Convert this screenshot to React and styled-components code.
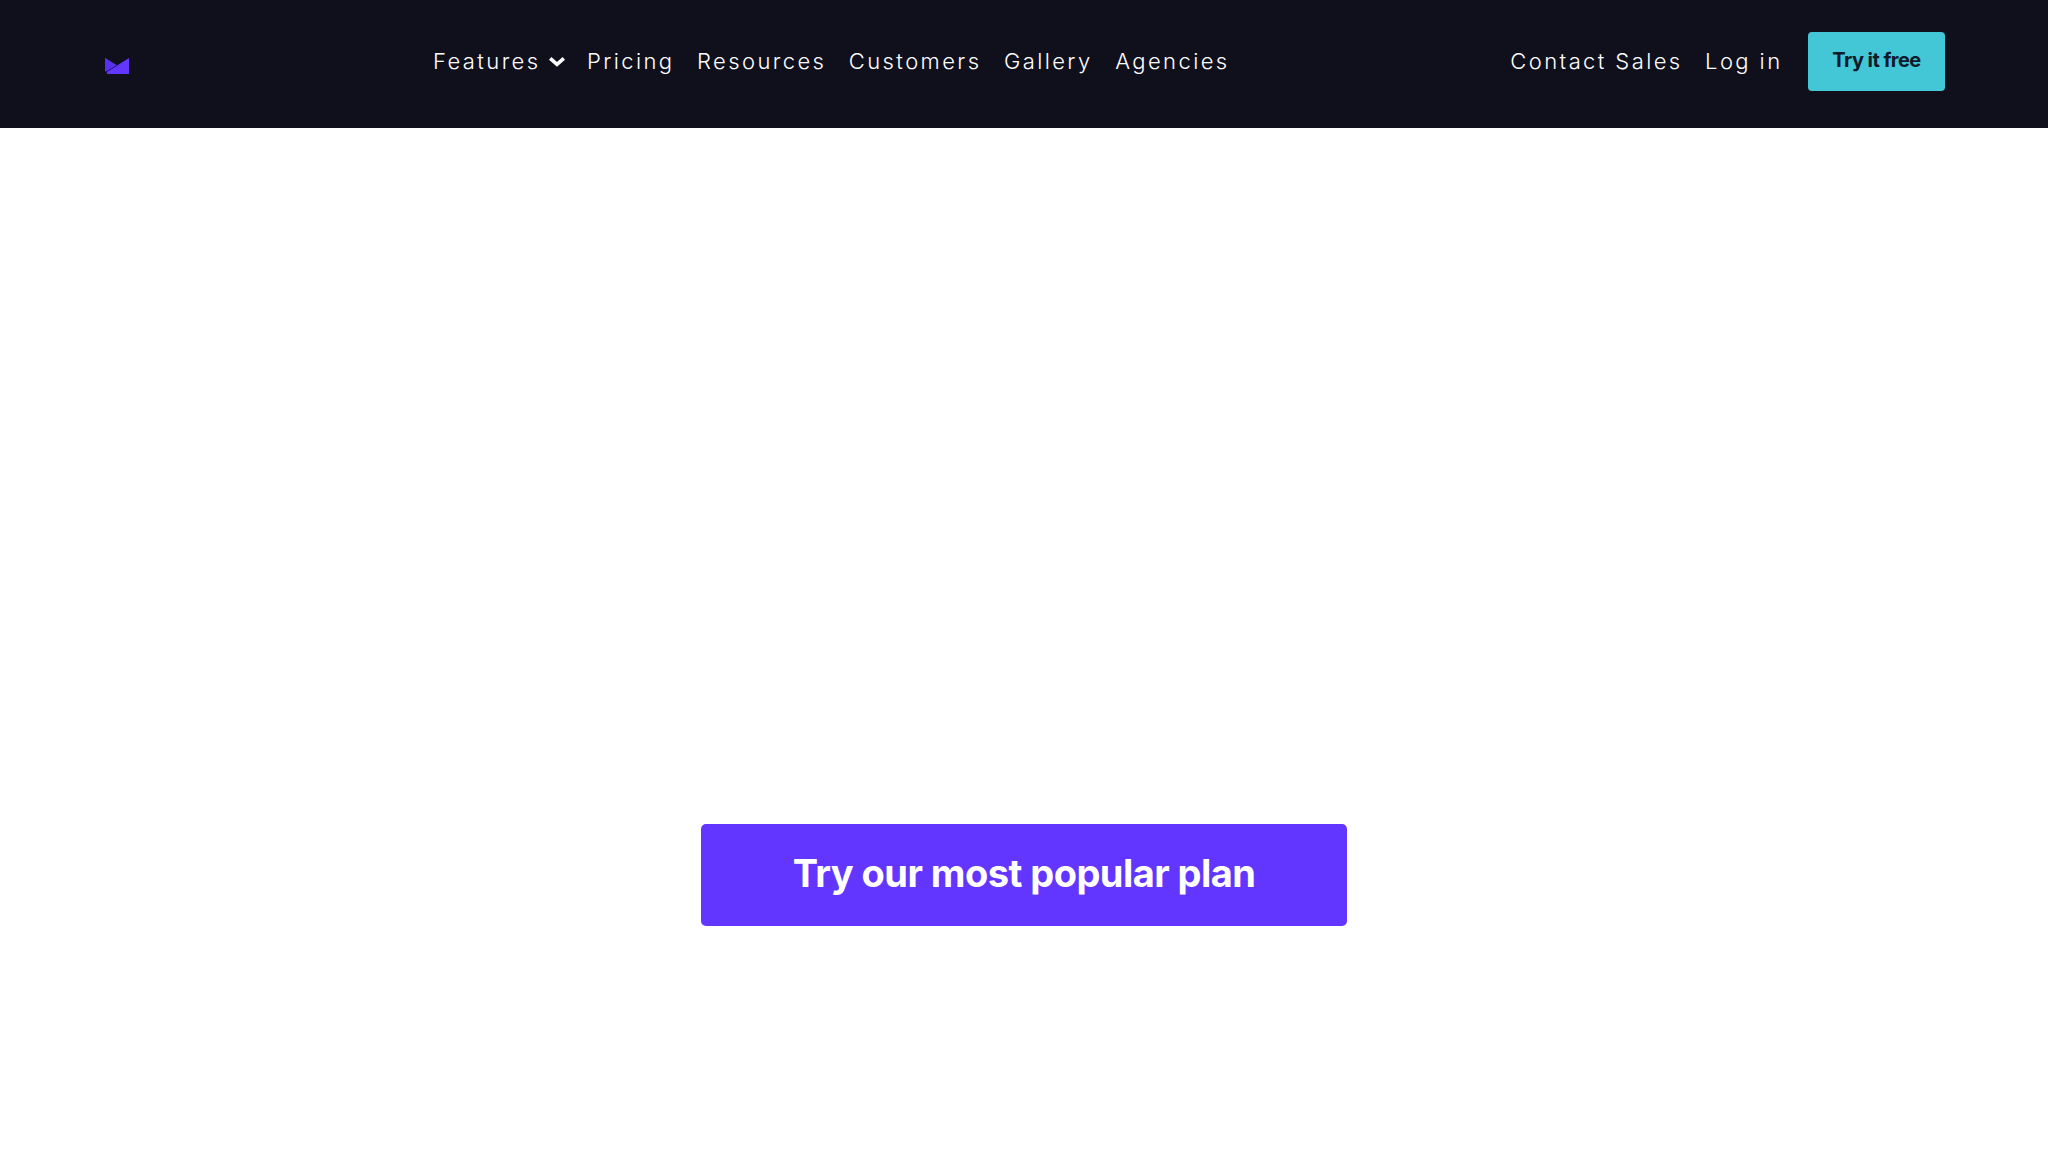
import React from 'react';
import styled, { createGlobalStyle } from 'styled-components';

const GlobalStyle = createGlobalStyle`
  html, body {
    margin: 0;
    background: #fff;
    font-family: Inter, "Liberation Sans", sans-serif;
  }
`;

const App = () => {
  return (
    <Page>
      <GlobalStyle />
      <Header>
        <Logo href="#" aria-label="Home">
          <svg width="24" height="16" viewBox="0 0 24 16">
            <path d="M0 0 L12 7.5 L24 0 V16 H2 Z" fill="#6236ff" />
            <path d="M0 0 L11 7 L0 14 Z" fill="#5a30f0" />
            <path d="M0 14.5 L12 7.5" stroke="#120b3c" strokeWidth="0.8" />
          </svg>
        </Logo>
        <Nav>
          <NavLink href="#">
            Features
            <svg width="16" height="11" viewBox="0 0 16 11">
              <path d="M1.2 2.4 L8 8.4 L14.8 2.4" fill="none" stroke="#fff" strokeWidth="3.6" />
            </svg>
          </NavLink>
          <NavLink href="#">Pricing</NavLink>
          <NavLink href="#">Resources</NavLink>
          <NavLink href="#">Customers</NavLink>
          <NavLink href="#">Gallery</NavLink>
          <NavLink href="#">Agencies</NavLink>
        </Nav>
        <RightNav>
          <NavLink href="#">Contact Sales</NavLink>
          <NavLink href="#">Log in</NavLink>
          <TryFree href="#">Try it free</TryFree>
        </RightNav>
      </Header>
      <Main>
        <PlanButton href="#">Try our most popular plan</PlanButton>
      </Main>
    </Page>
  );
};

const Page = styled.div`
  min-height: 1152px;
  display: flex;
  flex-direction: column;
`;

const Header = styled.header`
  height: 128px;
  box-sizing: border-box;
  padding: 0 103px 6px 105px;
  background: #0f101c;
  display: flex;
  align-items: center;
`;

const Logo = styled.a`
  display: flex;
  width: 24px;
  margin: 10px 304px 0 0;
`;

const Nav = styled.nav`
  display: flex;
  align-items: center;
  gap: 22.5px;
`;

const RightNav = styled.div`
  margin-left: auto;
  display: flex;
  align-items: center;
  gap: 22.5px;
`;

const NavLink = styled.a`
  display: flex;
  align-items: center;
  gap: 8px;
  font-size: 22px;
  font-weight: 300;
  letter-spacing: 2.4px;
  color: #fff;
  text-decoration: none;
`;

const TryFree = styled.a`
  width: 137px;
  height: 59px;
  margin-left: 3px;
  padding-bottom: 2px;
  box-sizing: border-box;
  display: flex;
  align-items: center;
  justify-content: center;
  border-radius: 4px;
  background: #43c7d6;
  color: #0f1a2b;
  font-size: 20px;
  font-weight: 700;
  letter-spacing: -0.55px;
  text-decoration: none;
`;

const Main = styled.main`
  display: flex;
  justify-content: center;
  padding-top: 696px;
`;

const PlanButton = styled.a`
  width: 646px;
  height: 102px;
  padding-bottom: 4px;
  box-sizing: border-box;
  display: flex;
  align-items: center;
  justify-content: center;
  border-radius: 5px;
  background: #6236ff;
  color: #fff;
  font-size: 38px;
  font-weight: 700;
  letter-spacing: -0.55px;
  text-decoration: none;
`;

export default App;
